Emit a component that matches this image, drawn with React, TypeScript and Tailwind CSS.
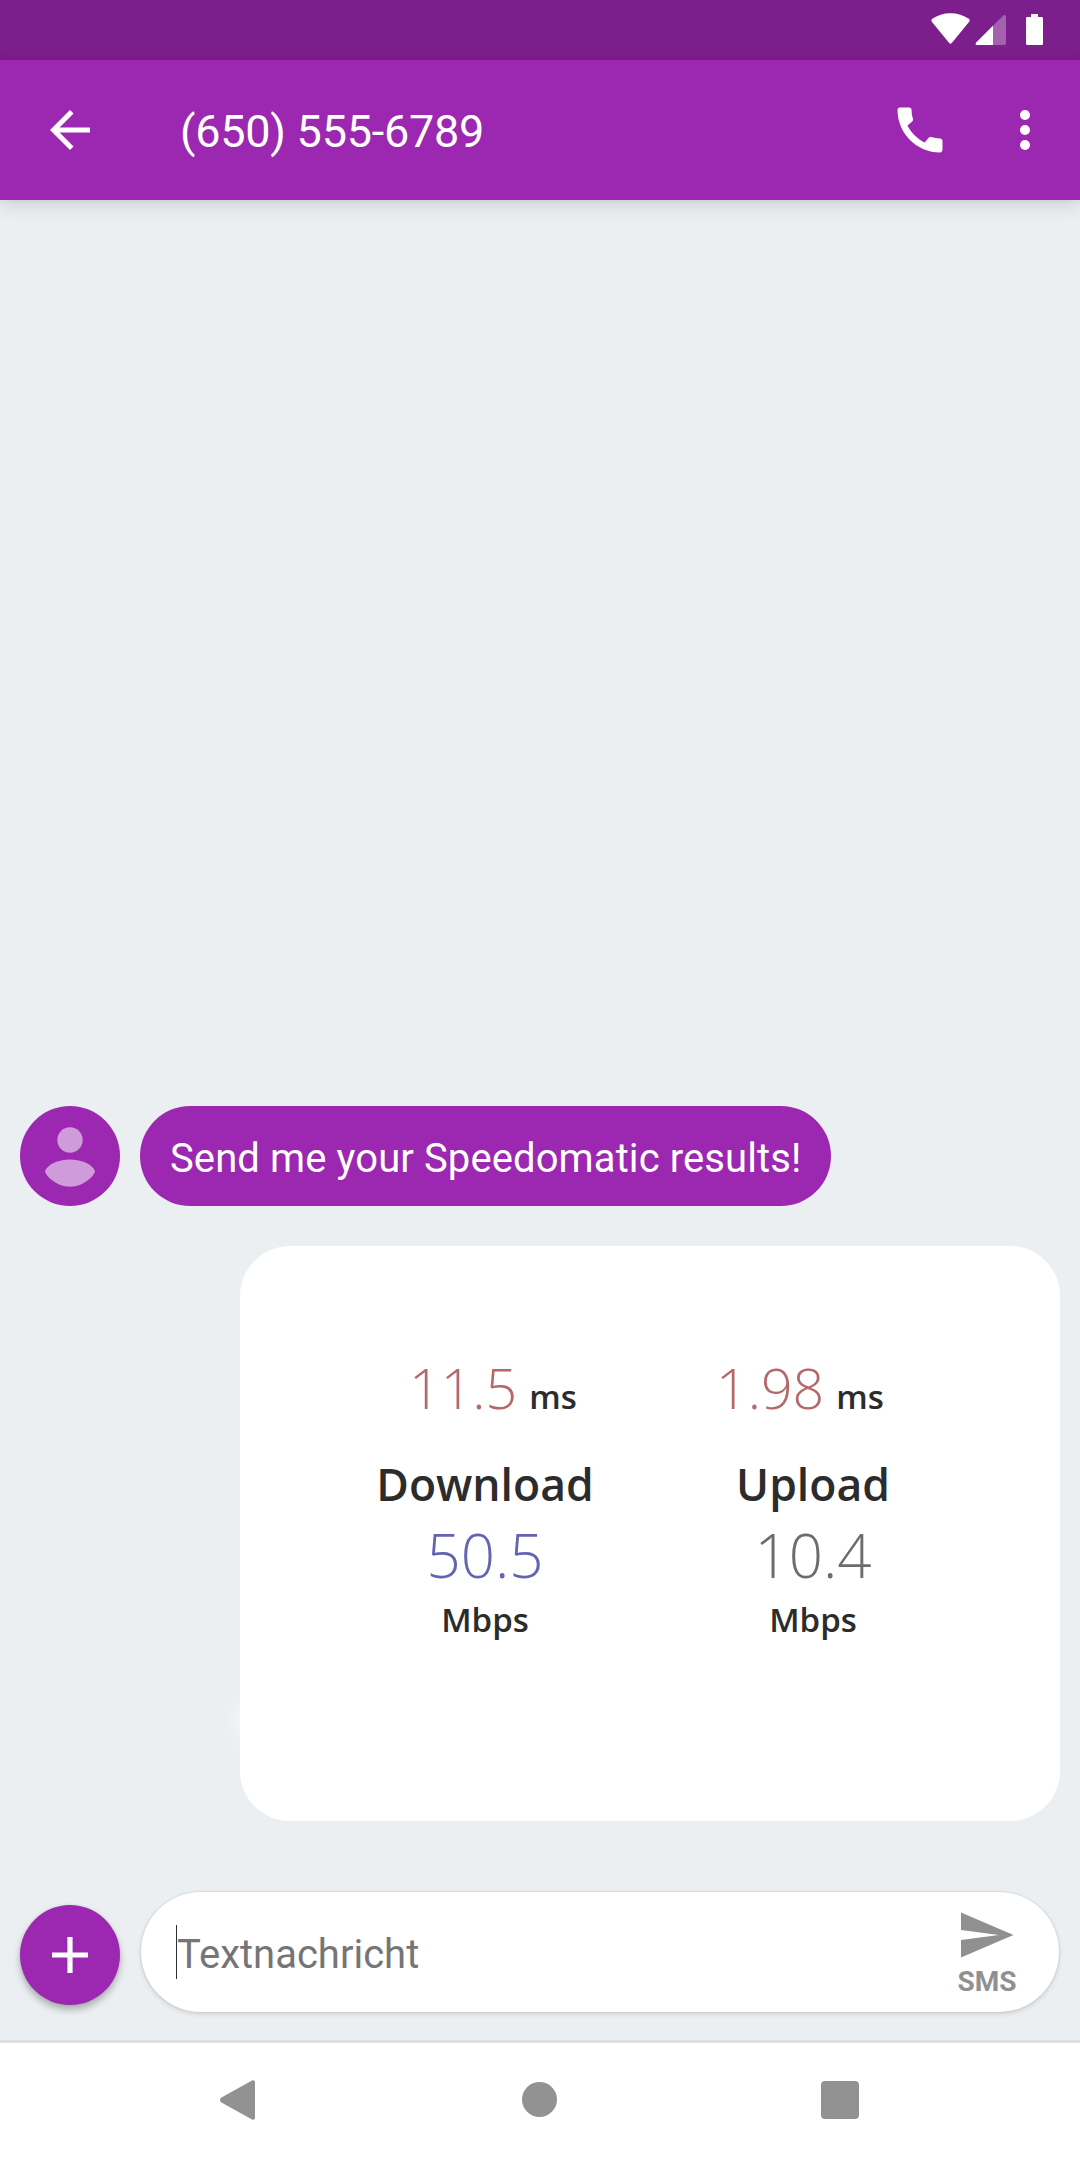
import React from "react";

const latencies = [
  { value: "11.5", left: "ml-[169px]", unit: "ml-[12px]" },
  { value: "1.98", left: "ml-[140px]", unit: "ml-[12px]" },
];

const speeds = [
  { label: "Download", value: "50.5", tone: "text-[#6464b4]" },
  { label: "Upload", value: "10.4", tone: "text-[#6c6c6c]" },
];

function StatusBar() {
  return (
    <div className="flex h-[60px] shrink-0 justify-end bg-[#7c1e8b] pr-[34px]">
      <svg width="118" height="60" viewBox="928 0 118 60" fill="#fff">
        <path d="M931.4 20.8Q931 19.6 932.3 18.8Q940 13.2 950.5 13.2T968.8 18.8Q970.1 19.6 969.6 20.8Q969.4 21.6 968.6 22.6L951.8 43Q950.5 44.4 949.2 43L932.4 22.6Q931.6 21.6 931.4 20.8Z" />
        <path
          d="M1006 16.5V43.2Q1006 45 1004.2 45H977.4Q974.6 44.6 976.2 42.4L1003.6 15.2Q1005.6 14.2 1006 16.5Z"
          opacity="0.3"
        />
        <path d="M993 25.7V45H977.4Q974.6 44.6 976.2 42.4Z" />
        <path d="M1031 14H1038V17H1041.8Q1043 17 1043 18.2V43.8Q1043 45 1041.8 45H1027.2Q1026 45 1026 43.8V18.2Q1026 17 1027.2 17H1031Z" />
      </svg>
    </div>
  );
}

function AppBar() {
  return (
    <header className="relative z-10 flex h-[140px] shrink-0 items-center bg-[#9c27b0] pr-[25px] pl-[40px] text-white shadow-[0_5px_18px_rgba(0,0,0,0.12),0_1px_6px_rgba(0,0,0,0.05)]">
      <button aria-label="Back" className="size-[60px]">
        <svg viewBox="0 0 24 24" fill="currentColor">
          <path d="M20 11H7.83l5.59-5.59L12 4l-8 8 8 8 1.41-1.41L7.83 13H20v-2z" />
        </svg>
      </button>
      <h1 className="ml-[80px] flex-1 pt-[4px] text-[45px] leading-[54px] font-normal tracking-[-0.25px]">
        (650) 555-6789
      </h1>
      <button aria-label="Call" className="size-[60px]">
        <svg viewBox="0 0 24 24" fill="currentColor">
          <path d="M20.01 15.38c-1.23 0-2.42-.2-3.53-.56a.977.977 0 0 0-1.01.24l-1.57 1.97c-2.83-1.35-5.48-3.9-6.89-6.83l1.95-1.66c.27-.28.35-.67.24-1.02-.37-1.11-.56-2.3-.56-3.53 0-.54-.45-.99-.99-.99H4.19C3.65 3 3 3.24 3 3.99 3 13.28 10.73 21 20.01 21c.71 0 .99-.63.99-1.18v-3.45c0-.54-.45-.99-.99-.99z" />
        </svg>
      </button>
      <button aria-label="More options" className="ml-[45px] size-[60px]">
        <svg viewBox="0 0 24 24" fill="currentColor">
          <circle cx="12" cy="6" r="2" />
          <circle cx="12" cy="12" r="2" />
          <circle cx="12" cy="18" r="2" />
        </svg>
      </button>
    </header>
  );
}

function Avatar() {
  return (
    <svg width="100" height="100" viewBox="0 0 100 100" className="shrink-0">
      <circle cx="50" cy="50" r="50" fill="#9c27b0" />
      <g fill="#d09bda">
        <circle cx="50" cy="34" r="12.7" />
        <path d="M25 65.500C26.500 59 38 53.500 50 53.500S73.500 59 75 65.500C75 68 65 80.700 50 80.700S25 68 25 65.500Z" />
      </g>
    </svg>
  );
}

function ResultCard() {
  return (
    <div className="relative h-[575px] w-[820px] self-end rounded-[50px] bg-white pt-[102px] font-['Open_Sans',sans-serif] text-[#2c2c2c]">
      <div className="absolute top-[446px] left-[-14px] h-[60px] w-[14px] bg-[radial-gradient(ellipse_at_right,#f3f4f6,#ebeff1_70%)]" />
      <div className="flex">
        {latencies.map((item) => (
          <div key={item.value} className={`${item.left} w-[167px] whitespace-nowrap leading-[80px]`}>
            <span className="text-[55.5px] font-light text-[#b66868]">{item.value}</span>
            <span className={`${item.unit} text-[33px] font-semibold`}>ms</span>
          </div>
        ))}
      </div>
      <div className="ml-[81px] grid w-[656px] grid-cols-2 text-center">
        {speeds.map((item) => (
          <div key={item.label} className="flex flex-col">
            <span className="mt-[11px] text-[44.5px] leading-[60px] font-semibold">{item.label}</span>
            <span className={`mt-[1px] text-[60px] leading-[81px] font-light ${item.tone}`}>{item.value}</span>
            <span className="mt-[1px] text-[33px] leading-[46px] font-semibold">Mbps</span>
          </div>
        ))}
      </div>
    </div>
  );
}

function Composer() {
  return (
    <div className="mt-[71px] mb-[28px] flex h-[120px] shrink-0">
      <button
        aria-label="Add"
        className="mt-[13px] ml-[20px] flex size-[100px] items-center justify-center rounded-full bg-[#9c27b0] shadow-[0_5px_7px_rgba(0,0,0,0.26),0_0_3px_rgba(0,0,0,0.1)]"
      >
        <svg width="36" height="36" viewBox="0 0 36 36" fill="#fff">
          <path d="M15.400 0H20.600V15.400H36V20.600H20.600V36H15.400V20.600H0V15.400H15.400Z" />
        </svg>
      </button>
      <div className="ml-[21px] flex w-[918px] rounded-full bg-white shadow-[0_2px_5px_rgba(0,0,0,0.12),0_0_2px_1px_rgba(0,0,0,0.06)]">
        <div className="mt-[33px] ml-[35px] h-[54px] w-px bg-[#263238]" />
        <div className="mt-[39px] flex-1 text-[40px] leading-[48px] text-[#757575]">
          Textnachricht
        </div>
        <button aria-label="Send SMS" className="mt-[20px] mr-[42px] flex w-[60px] flex-col items-center text-[#909090]">
          <svg width="53" height="46" viewBox="0 0 53 46" fill="currentColor">
            <path d="M0 0.500L52.500 23L0 45.500V28L38 23L0 18Z" />
          </svg>
          <span className="mt-[8px] text-[28px] leading-[32px] font-bold">SMS</span>
        </button>
      </div>
    </div>
  );
}

function NavBar() {
  return (
    <nav className="flex h-[120px] shrink-0 items-start border-t-[3px] border-[#e0e0e0] bg-white text-[#929292]">
      <svg width="35" height="40" viewBox="0 0 35 40" className="mt-[37px] ml-[220px]" fill="currentColor">
        <path d="M1 17.700L32 0.400Q35 -0.600 35 2.600V37.400Q35 40.600 32 39.600L1 22.300Q-1 20 1 17.700Z" />
      </svg>
      <div className="mt-[39px] ml-[267px] size-[35px] rounded-full bg-current" />
      <div className="mt-[38px] ml-[264px] size-[38px] rounded-[4px] bg-current" />
    </nav>
  );
}

export default function App() {
  return (
    <div className="flex h-[2160px] w-[1080px] flex-col overflow-hidden bg-[#ebeff1] font-[Roboto,sans-serif]">
      <StatusBar />
      <AppBar />
      <main className="flex flex-1 flex-col justify-end gap-[40px] px-[20px]">
        <div className="flex gap-[20px]">
          <Avatar />
          <div className="h-[100px] w-[691px] rounded-full bg-[#9c27b0] pt-[29px] pl-[30px] text-[40px] leading-[48px] tracking-[0.1px] whitespace-nowrap text-white">
            Send me your Speedomatic results!
          </div>
        </div>
        <ResultCard />
      </main>
      <Composer />
      <NavBar />
    </div>
  );
}
